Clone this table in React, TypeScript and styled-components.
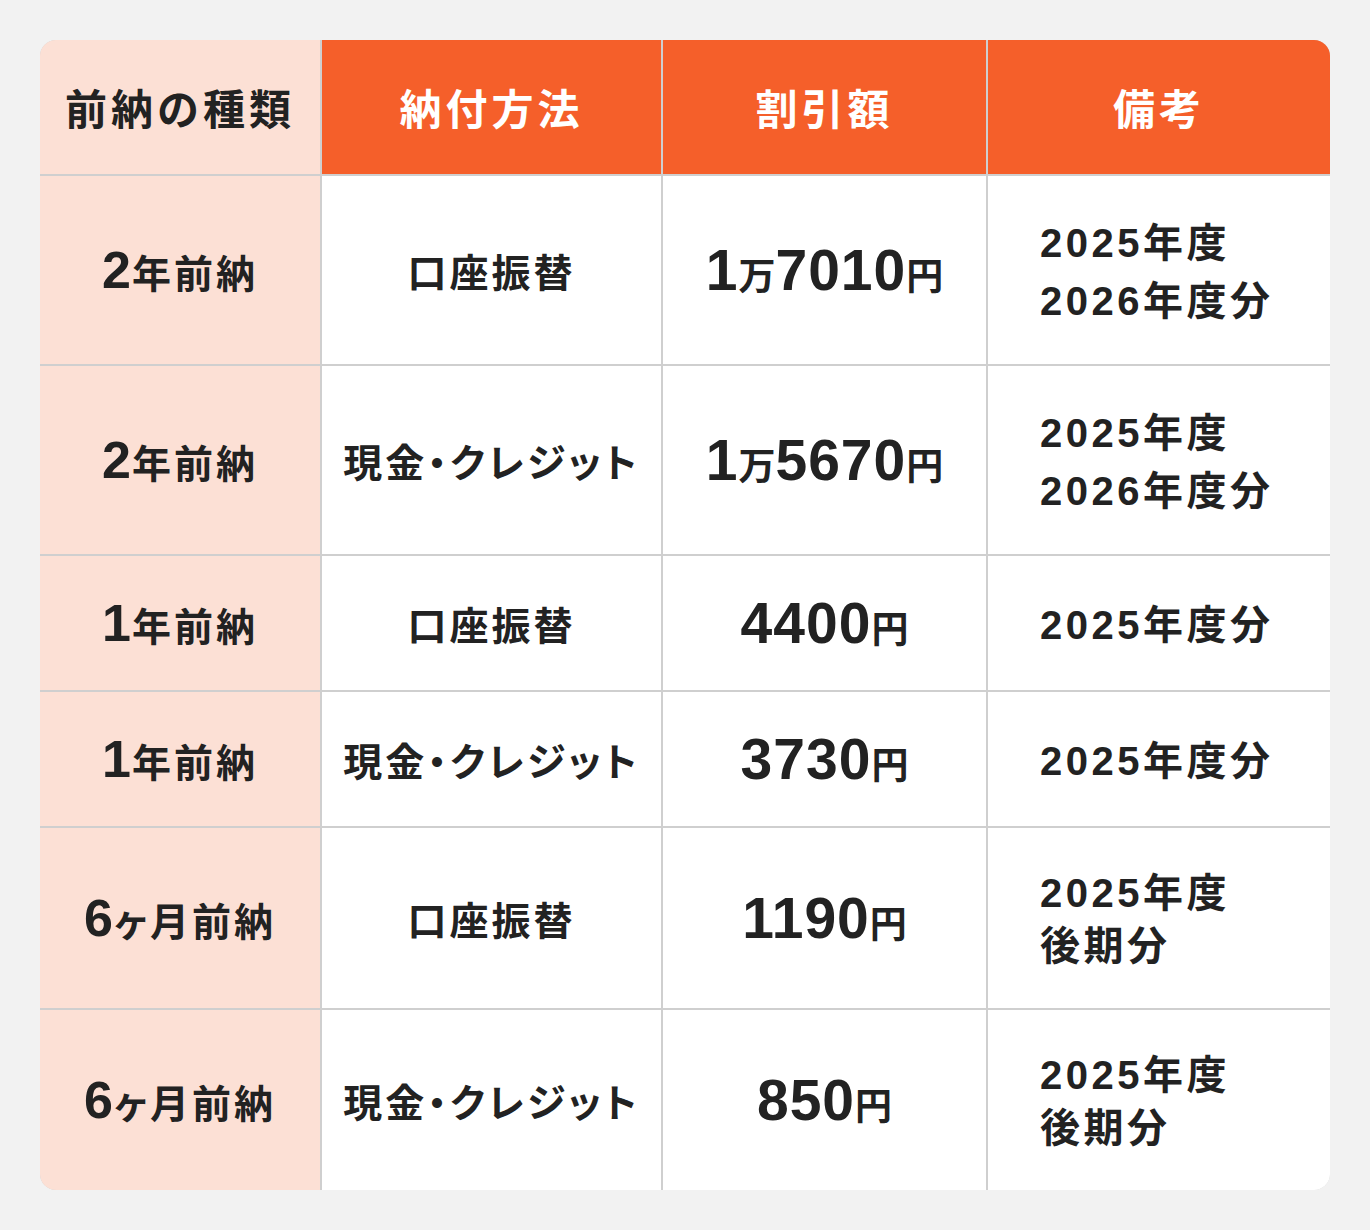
import React from "react";
import styled, { createGlobalStyle } from "styled-components";

const GlobalStyle = createGlobalStyle`
  html, body {
    margin: 0;
    padding: 0;
    background: #f2f2f2;
  }
  body {
    font-family: "Liberation Sans", "Noto Sans CJK JP", sans-serif;
    color: #222;
  }
`;

const Page = styled.div`
  padding: 40px;
  width: 1290px;
`;

const Table = styled.div`
  display: grid;
  grid-template-columns: 280px 339px 323px 342px;
  grid-template-rows: 134px 188px 188px 134px 134px 180px 180px;
  gap: 2px;
  background: #cfcfcf;
  border-radius: 16px;
  overflow: hidden;
`;

const Cell = styled.div<{ $tone: "peach" | "orange" | "white"; $align?: "center" | "left" }>`
  display: flex;
  align-items: center;
  justify-content: ${(p) => (p.$align === "left" ? "flex-start" : "center")};
  padding-left: ${(p) => (p.$align === "left" ? "52px" : "0")};
  background: ${(p) =>
    p.$tone === "peach" ? "#fce0d5" : p.$tone === "orange" ? "#f55f2a" : "#ffffff"};
  color: ${(p) => (p.$tone === "orange" ? "#ffffff" : "#222222")};
  font-weight: 700;
`;

const HeadText = styled.span<{ $dark?: boolean }>`
  font-family: "Noto Sans CJK JP", sans-serif;
  font-size: 42px;
  letter-spacing: 4px;
  font-weight: 700;
  line-height: 1;
  color: ${(p) => (p.$dark ? "#222222" : "#ffffff")};
`;

const Kind = styled.span`
  display: inline-flex;
  align-items: baseline;
  font-weight: 700;
`;

const BigNum = styled.span<{ $size: number }>`
  font-family: "Liberation Sans", sans-serif;
  font-size: ${(p) => p.$size}px;
  font-weight: 700;
  letter-spacing: 1px;
`;

const Jp = styled.span<{ $size: number; $ls?: number }>`
  font-family: "Noto Sans CJK JP", sans-serif;
  font-size: ${(p) => p.$size}px;
  letter-spacing: ${(p) => p.$ls ?? 2}px;
  font-weight: 700;
  font-feature-settings: "palt";
`;

const Method = styled.span`
  font-family: "Noto Sans CJK JP", sans-serif;
  font-size: 39px;
  letter-spacing: 3px;
  font-weight: 700;
  font-feature-settings: "palt";
`;

const Note = styled.div<{ $lh: number }>`
  font-family: "Liberation Sans", "Noto Sans CJK JP", sans-serif;
  font-size: 40px;
  line-height: ${(p) => p.$lh}px;
  letter-spacing: 3.5px;
  font-weight: 700;
  text-align: left;
  padding-top: 3px;
`;

type Row = {
  kindNum: string;
  kindRest: string;
  method: string;
  man?: string;
  amount: string;
  note: string[];
  lh: number;
};

const rows: Row[] = [
  { kindNum: "2", kindRest: "年前納", method: "口座振替", man: "1", amount: "7010", note: ["2025年度", "2026年度分"], lh: 58 },
  { kindNum: "2", kindRest: "年前納", method: "現金・クレジット", man: "1", amount: "5670", note: ["2025年度", "2026年度分"], lh: 58 },
  { kindNum: "1", kindRest: "年前納", method: "口座振替", amount: "4400", note: ["2025年度分"], lh: 58 },
  { kindNum: "1", kindRest: "年前納", method: "現金・クレジット", amount: "3730", note: ["2025年度分"], lh: 58 },
  { kindNum: "6", kindRest: "ヶ月前納", method: "口座振替", amount: "1190", note: ["2025年度", "後期分"], lh: 53 },
  { kindNum: "6", kindRest: "ヶ月前納", method: "現金・クレジット", amount: "850", note: ["2025年度", "後期分"], lh: 53 },
];

export default function App() {
  return (
    <>
      <GlobalStyle />
      <Page>
        <Table>
          <Cell $tone="peach">
            <HeadText $dark>前納の種類</HeadText>
          </Cell>
          <Cell $tone="orange">
            <HeadText>納付方法</HeadText>
          </Cell>
          <Cell $tone="orange">
            <HeadText>割引額</HeadText>
          </Cell>
          <Cell $tone="orange">
            <HeadText>備考</HeadText>
          </Cell>
          {rows.map((r, i) => (
            <React.Fragment key={i}>
              <Cell $tone="peach">
                <Kind>
                  <BigNum $size={52}>{r.kindNum}</BigNum>
                  <Jp $size={39} $ls={3}>{r.kindRest}</Jp>
                </Kind>
              </Cell>
              <Cell $tone="white">
                <Method>{r.method}</Method>
              </Cell>
              <Cell $tone="white">
                <Kind>
                  {r.man && (
                    <>
                      <BigNum $size={57}>{r.man}</BigNum>
                      <Jp $size={37} $ls={0}>万</Jp>
                    </>
                  )}
                  <BigNum $size={57}>{r.amount}</BigNum>
                  <Jp $size={37} $ls={0}>円</Jp>
                </Kind>
              </Cell>
              <Cell $tone="white" $align="left">
                <Note $lh={r.lh}>
                  {r.note.map((n, j) => (
                    <div key={j}>{n}</div>
                  ))}
                </Note>
              </Cell>
            </React.Fragment>
          ))}
        </Table>
      </Page>
    </>
  );
}
